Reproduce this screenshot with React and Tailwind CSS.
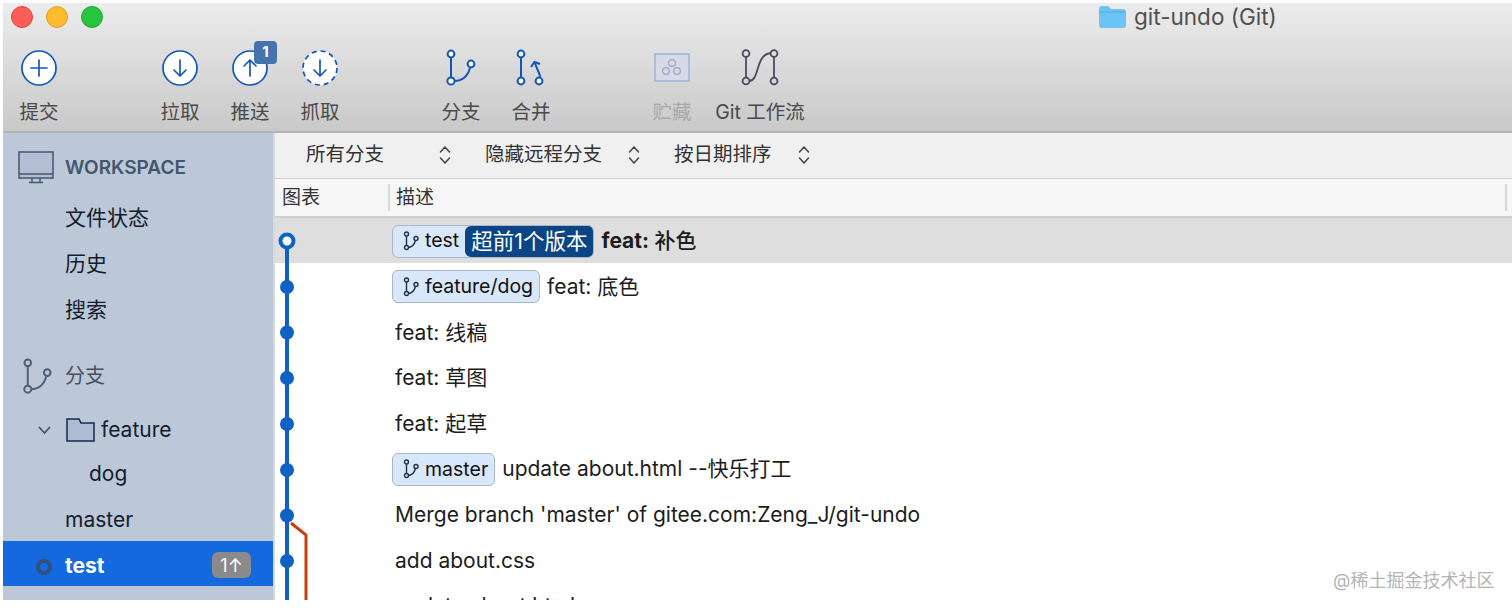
import React from 'react';

const BLUE = '#1257b8';

// toolbar icons, all drawn on a 38x38 box
const CircleIcon = ({ dashed, children }) => (
    <svg width="38" height="38" viewBox="0 0 38 38" fill="none" stroke={BLUE} strokeWidth="1.7" strokeLinecap="round" strokeLinejoin="round">
        <circle cx="19" cy="19" r="17" fill="#fff" strokeDasharray={dashed ? '5 3.9' : undefined} strokeLinecap="butt" />
        {children}
    </svg>
);

const BranchIcon = ({ color = BLUE, size = 38, fill = '#fff' }) => (
    <svg width={size} height={size} viewBox="0 0 38 38" fill="none" stroke={color} strokeWidth="2">
        <path d="M9 8V29" />
        <path d="M12 32C21 32 26 26 28 19" />
        <circle cx="9" cy="5" r="3.4" fill={fill} />
        <circle cx="9" cy="32" r="3.6" fill={fill} />
        <circle cx="29" cy="15" r="3.4" fill={fill} />
    </svg>
);

const MergeIcon = () => (
    <svg width="38" height="38" viewBox="0 0 38 38" fill="none" stroke={BLUE} strokeWidth="2">
        <path d="M9 8V29" />
        <path d="M28 28C28 24 25 21 23 14" />
        <path d="M19 18L22.5 13L28 15" />
        <circle cx="9" cy="5" r="3.4" fill="#fff" />
        <circle cx="9" cy="32" r="3.4" fill="#fff" />
        <circle cx="27" cy="32" r="3.4" fill="#fff" />
    </svg>
);

const StashIcon = () => (
    <svg width="36" height="30" viewBox="0 0 36 30" fill="#d4dbe6" stroke="#9fb3d8" strokeWidth="1.5">
        <rect x="1" y="1" width="34" height="27" />
        <g fill="none" stroke="#a3a3c6" strokeWidth="1.2">
            <circle cx="18" cy="10" r="3.3" />
            <circle cx="12" cy="18" r="3.3" />
            <circle cx="23" cy="18" r="3.3" />
        </g>
    </svg>
);

const FlowIcon = () => (
    <svg width="40" height="38" viewBox="0 0 40 38" fill="none" stroke="#4a4a5c" strokeWidth="1.8">
        <path d="M6 8V29" />
        <path d="M34 8V29" />
        <path d="M9 32C20 32 15 5 31 4" />
        <circle cx="6" cy="4.500" r="3.400" />
        <circle cx="6" cy="32" r="3.400" />
        <circle cx="34" cy="4.500" r="3.400" />
        <circle cx="34" cy="32" r="3.400" />
    </svg>
);

const MiniBranch = () => (
    <svg width="16" height="20" viewBox="0 0 16 20" fill="none" stroke="#23304a" strokeWidth="1.4" className="shrink-0">
        <path d="M3.5 5V14" />
        <path d="M5 16.500C9 16.500 11.500 13 12.500 9.500" />
        <circle cx="3.500" cy="3" r="2" />
        <circle cx="3.500" cy="16.500" r="2" />
        <circle cx="13" cy="7.500" r="2" />
    </svg>
);

const UpDown = () => (
    <svg width="12" height="20" viewBox="0 0 12 20" fill="none" stroke="#444" strokeWidth="1.500" strokeLinecap="round" strokeLinejoin="round">
        <path d="M1.500 7L6 2L10.500 7" />
        <path d="M1.500 13L6 18L10.500 13" />
    </svg>
);

const ToolItem = ({ label, icon, className = 'w-[70px]', muted }) => (
    <div className={`flex flex-col items-center shrink-0 ${className}`}>
        <div className="h-[38px] flex items-center justify-center relative">{icon}</div>
        <span className={`mt-[11px] text-[19.5px] leading-[28px] whitespace-nowrap ${muted ? 'text-[#a8a8a8]' : 'text-[#4a4a4a]'}`}>{label}</span>
    </div>
);

const Pill = ({ name, ahead }) => (
    <span className="h-[33px] flex items-center rounded-[6px] border border-[#a9b6c6] bg-[#d9e7fb] overflow-hidden shrink-0">
        <span className="pl-[10px] pr-[6px] flex items-center gap-[6px] text-[19.5px] text-[#111]">
            <MiniBranch />
            {name}
        </span>
        {ahead && (
            <span className="h-full flex items-center px-[6px] rounded-l-[6px] bg-[#0b4586] text-[21.5px] text-white">{ahead}</span>
        )}
    </span>
);

const commits = [
    { pill: 'test', ahead: '超前1个版本', bold: 'feat:', text: ' 补色', selected: true },
    { pill: 'feature/dog', text: 'feat: 底色' },
    { text: 'feat: 线稿' },
    { text: 'feat: 草图' },
    { text: 'feat: 起草' },
    { pill: 'master', text: 'update about.html --快乐打工' },
    { text: "Merge branch 'master' of gitee.com:Zeng_J/git-undo" },
    { text: 'add about.css' },
    { text: 'update about.html' },
];

const dots = [69, 114.500, 160, 206, 252, 297.500, 343];

const App = () => (
    <div className="w-[1512px] h-[608px] bg-white pl-[3px] pt-[3px] pb-[8px] overflow-hidden relative font-['Inter','Noto_Sans_CJK_SC',sans-serif]">
        <div className="h-full flex flex-col overflow-hidden">

            {/* toolbar */}
            <div className="h-[130px] shrink-0 bg-gradient-to-b from-[#ececec] to-[#c9c9c9] border-b-2 border-[#b4b4b4]">
                <div className="h-[26px] pt-px pl-[8px] flex items-center">
                    <div className="flex gap-[13px]">
                        <div className="w-[22px] h-[22px] rounded-full bg-[#fb5e57] border border-[#e0443e]" />
                        <div className="w-[22px] h-[22px] rounded-full bg-[#fdbc2e] border border-[#e0a028]" />
                        <div className="w-[22px] h-[22px] rounded-full bg-[#29c43f] border border-[#1fa92f]" />
                    </div>
                    <div className="ml-[996px] flex items-center gap-[8px]">
                        <svg width="27" height="23" viewBox="0 0 27 23">
                            <path d="M0 4Q0 1 3 1H9L12 4H24Q27 4 27 7V20Q27 23 24 23H3Q0 23 0 20Z" fill="#6cc4f5" />
                            <path d="M0 7H27" stroke="#4ba9e3" strokeWidth="1" />
                        </svg>
                        <span className="text-[22.5px] leading-[26px] text-[#505050] whitespace-nowrap">git-undo (Git)</span>
                    </div>
                </div>
                <div className="mt-[20px] pl-px flex">
                    <ToolItem label="提交" icon={<CircleIcon><path d="M19 11V27M11 19H27" /></CircleIcon>} />
                    <ToolItem className="w-[70px] ml-[71px]" label="拉取" icon={<CircleIcon><path d="M19 11V27M13 21L19 27L25 21" /></CircleIcon>} />
                    <ToolItem label="推送" icon={
                        <>
                            <CircleIcon><path d="M19 27V11M13 17L19 11L25 17" /></CircleIcon>
                            <span className="absolute left-[23px] top-[-8px] w-[23px] h-[23px] rounded-[4px] bg-[#4473ad] text-white text-[15px] font-bold flex items-center justify-center">1</span>
                        </>
                    } />
                    <ToolItem label="抓取" icon={<CircleIcon dashed><path d="M19 11V27M13 21L19 27L25 21" /></CircleIcon>} />
                    <ToolItem className="w-[70px] ml-[71px]" label="分支" icon={<BranchIcon />} />
                    <ToolItem label="合并" icon={<MergeIcon />} />
                    <ToolItem className="w-[70px] ml-[71px]" label="贮藏" muted icon={<StashIcon />} />
                    <ToolItem className="w-[106px]" label="Git 工作流" icon={<FlowIcon />} />
                </div>
            </div>

            <div className="flex-1 flex min-h-0">

                {/* sidebar */}
                <div className="w-[270px] shrink-0 bg-[#bcc8d8] text-[21px] text-[#141c2c] flex flex-col">
                    <div className="h-[46px] mt-[11px] pl-[15px] flex items-center gap-[11px]">
                        <svg width="36" height="33" viewBox="0 0 36 33" fill="#b3bed4" stroke="#44566c" strokeWidth="1.500" className="shrink-0">
                            <rect x="1" y="1" width="34" height="26" />
                            <path d="M1 23H35" />
                            <path d="M14 27V31M22 27V31M11 31.500H25" fill="none" />
                        </svg>
                        <span className="pt-[3px] text-[19px] font-semibold text-[#44566c]">WORKSPACE</span>
                    </div>
                    <div className="h-[46px] mt-[5px] pl-[62px] flex items-center">文件状态</div>
                    <div className="h-[46px] pl-[62px] flex items-center">历史</div>
                    <div className="h-[46px] pl-[62px] flex items-center">搜索</div>
                    <div className="h-[46px] mt-[20px] pl-[16px] flex items-center gap-[9px]">
                        <BranchIcon color="#4f5f73" size="37" fill="#bcc8d8" />
                        <span className="text-[#44505f] text-[20px]">分支</span>
                    </div>
                    <div className="h-[46px] mt-[8px] pl-[35px] flex items-center">
                        <svg width="13" height="10" viewBox="0 0 13 10" fill="none" stroke="#44566c" strokeWidth="1.800" className="shrink-0">
                            <path d="M1 2L6.500 8L12 2" />
                        </svg>
                        <svg width="29" height="24" viewBox="0 0 29 24" fill="#aebbd3" stroke="#14284f" strokeWidth="1.500" className="ml-[15px] shrink-0">
                            <path d="M1 1H13L15 5H28V23H1Z" />
                        </svg>
                        <span className="ml-[6px]">feature</span>
                    </div>
                    <div className="h-[42px] pl-[86px] flex items-center">dog</div>
                    <div className="h-[46px] pt-[4px] pl-[62px] flex items-center">master</div>
                    <div className="h-[45px] pt-[3px] pl-[33px] pr-[22px] flex items-center bg-[#1469de]">
                        <span className="mt-[3px] w-[16px] h-[16px] rounded-full border-[4px] border-[#33507e]" />
                        <span className="ml-[13px] pt-[2px] font-bold text-white">test</span>
                        <span className="ml-auto w-[39px] h-[26px] rounded-[6px] bg-[#8a8a8a] text-white text-[18px] flex items-center justify-center">1↑</span>
                    </div>
                </div>
                <div className="w-[2px] shrink-0 bg-[#d6dade]" />

                {/* history */}
                <div className="flex-1 min-w-0 flex flex-col relative">
                    <div className="h-[46px] shrink-0 pb-[2px] bg-[#f0f0f0] border-b border-[#d2d2d2] flex items-center text-[19.5px] text-[#333] whitespace-nowrap">
                        <span className="ml-[31px] w-[133px]">所有分支</span>
                        <UpDown />
                        <span className="ml-[34px] w-[143px]">隐藏远程分支</span>
                        <UpDown />
                        <span className="ml-[34px] w-[124px]">按日期排序</span>
                        <UpDown />
                    </div>
                    <div className="h-[39px] shrink-0 bg-[#f6f6f6] border-b-2 border-[#d0d0d0] flex items-center text-[19px] text-[#333]">
                        <span className="ml-[7px] w-[108px] h-[27px] leading-[27px] border-r-2 border-[#d8d8d8]">图表</span>
                        <span className="ml-[6px] flex-1 leading-[27px]">描述</span>
                        <span className="w-[2px] h-[27px] mr-[5px] bg-[#d8d8d8]" />
                    </div>

                    <div className="flex-1 min-h-0 overflow-hidden relative text-[21px] text-[#1c1c1c]">
                        {commits.map((c, i) => (
                            <div key={i} className={`pl-[117px] flex items-center gap-[7px] whitespace-nowrap ${c.selected ? 'h-[45px] pt-px bg-[#dedede]' : 'h-[45.6px] pt-[2px]'}`}>
                                {c.pill && <Pill name={c.pill} ahead={c.ahead} />}
                                <span className={c.pill ? '' : 'pl-[3px]'}>
                                    {c.bold && <b>{c.bold}</b>}
                                    <span className={c.bold ? 'font-medium' : ''}>{c.text}</span>
                                </span>
                            </div>
                        ))}

                        {/* commit graph */}
                        <svg width="50" height="385" viewBox="0 0 50 385" fill="none" className="absolute left-0 top-0">
                            <path d="M12 23V385" stroke="#0f62c4" strokeWidth="4" />
                            <path d="M16 305L31 317V385" stroke="#c8400f" strokeWidth="3" />
                            <circle cx="12" cy="23" r="6.500" fill="#fff" stroke="#0f62c4" strokeWidth="4" />
                            {dots.map(y => <circle key={y} cx="12" cy={y} r="7" fill="#0f62c4" />)}
                        </svg>
                    </div>
                </div>
            </div>
        </div>

        <span className="absolute left-[1333px] top-[568px] text-[18px] leading-[26px] text-[#b4b4b4] whitespace-nowrap">@稀土掘金技术社区</span>
    </div>
);

export default App;
